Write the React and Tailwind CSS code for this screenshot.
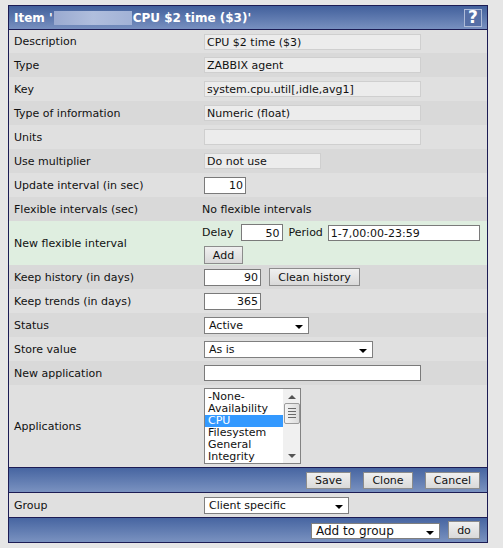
import React from "react";

const Arrow = () => (
  <span className="mt-[4px] h-0 w-0 border-l-[4px] border-r-[4px] border-t-[4px] border-l-transparent border-r-transparent border-t-black" />
);

const Select = ({ w, text }) => (
  <div className={`ml-[2px] flex h-[17px] items-center justify-between border border-[#7f7f7f] bg-white pl-[4px] pr-[5px] ${w}`}>
    <span className="pt-[1px] leading-none">{text}</span>
    <Arrow />
  </div>
);

const RO = ({ w, text }) => (
  <div className={`ml-[2px] flex h-[16px] items-center border border-[#cfcfcf] bg-[#ececec] pl-[2px] pt-[1px] leading-none ${w}`}>{text}</div>
);

const Num = ({ w, text }) => (
  <div className={`ml-[2px] flex h-[17px] items-center justify-end border border-[#7a7a7a] bg-white pr-[2px] pt-[1px] leading-none ${w}`}>{text}</div>
);

const Btn = ({ w, text, h = "h-[17px]" }) => (
  <div className={`flex ${h} items-center justify-center border border-[#8c8c8c] bg-gradient-to-b from-[#f0f0f0] to-[#d9d9d9] pt-[1px] leading-none ${w}`}>{text}</div>
);

const Row = ({ label, bg, h = "h-[24px]", children }) => (
  <div className={`flex items-center ${h} ${bg}`}>
    <div className="w-[193px] shrink-0 pl-[5px] pt-[2px]">{label}</div>
    <div className="flex flex-1 items-center">{children}</div>
  </div>
);

const L = "bg-[#e0e0e0]";
const D = "bg-[#d9d9d9]";

export default function App() {
  return (
    <div className="h-[548px] w-[503px] bg-[#e6e6e6] pl-[8px] pt-[5px] font-['DejaVu_Sans',Verdana,sans-serif] text-[11px] text-[#111]">
      <div className="w-[480px] border border-[#1c1c54]">
        {/* header */}
        <div className="flex h-[24px] items-center justify-between border-b border-[#1c1c54] bg-gradient-to-b from-[#42609c] to-[#7890bf] pl-[5px] pr-[5px]">
          <div className="flex items-center pt-[1px] text-[12px] font-bold leading-none text-white">
            <span>Item '</span>
            <span className="mx-[1px] inline-block h-[14px] w-[78px] bg-gradient-to-r from-[#9aaad0] via-[#b0bedd] to-[#a2b2d6] blur-[0.5px]" />
            <span>CPU $2 time ($3)'</span>
          </div>
          <div className="flex h-[18px] w-[18px] items-center justify-center border border-[#aebbd8] bg-[#566fa6] text-[17px] font-bold leading-none text-white">?</div>
        </div>

        <Row label="Description" bg={L} h="h-[23px]"><RO w="w-[217px]" text="CPU $2 time ($3)" /></Row>
        <Row label="Type" bg={D}><RO w="w-[217px]" text="ZABBIX agent" /></Row>
        <Row label="Key" bg={L}><RO w="w-[217px]" text="system.cpu.util[,idle,avg1]" /></Row>
        <Row label="Type of information" bg={D}><RO w="w-[217px]" text="Numeric (float)" /></Row>
        <Row label="Units" bg={L}><RO w="w-[217px]" text="" /></Row>
        <Row label="Use multiplier" bg={D}><RO w="w-[117px]" text="Do not use" /></Row>
        <Row label="Update interval (in sec)" bg={L}><Num w="w-[42px]" text="10" /></Row>
        <Row label="Flexible intervals (sec)" bg={D}><span className="pt-[2px]">No flexible intervals</span></Row>
        <div className="flex h-[44px] items-center bg-[#dfeee0]">
          <div className="w-[193px] shrink-0 pl-[5px] pt-[2px]">New flexible interval</div>
          <div className="flex flex-col gap-[5px] pt-[2px]">
            <div className="flex items-center">
              <span className="mr-[5px] pt-[1px]">Delay</span>
              <Num w="w-[42px]" text="50" />
              <span className="ml-[6px] mr-[5px] pt-[1px]">Period</span>
              <div className="flex h-[16px] w-[152px] items-center border border-[#7a7a7a] bg-white pl-[2px] pt-[1px] leading-none">1-7,00:00-23:59</div>
            </div>
            <div className="ml-[2px]"><Btn w="w-[39px]" h="h-[18px]" text="Add" /></div>
          </div>
        </div>
        <Row label="Keep history (in days)" bg={D}>
          <Num w="w-[57px]" text="90" />
          <div className="ml-[8px]"><Btn w="w-[91px]" h="h-[18px]" text="Clean history" /></div>
        </Row>
        <Row label="Keep trends (in days)" bg={L}><Num w="w-[57px]" text="365" /></Row>
        <Row label="Status" bg={D}><Select w="w-[105px]" text="Active" /></Row>
        <Row label="Store value" bg={L}><Select w="w-[169px]" text="As is" /></Row>
        <Row label="New application" bg={D}>
          <div className="ml-[2px] h-[16px] w-[217px] border border-[#7a7a7a] bg-white" />
        </Row>
        <Row label="Applications" bg={L} h="h-[82px]">
          <div className="ml-[2px] mt-[-1px] flex h-[76px] w-[97px] overflow-hidden border border-[#828282] bg-white">
            <div className="flex flex-1 flex-col pt-[2px] leading-[12px]">
              <div className="pl-[3px]">-None-</div>
              <div className="pl-[3px]">Availability</div>
              <div className="bg-[#3399ff] pl-[3px] text-white">CPU</div>
              <div className="pl-[3px]">Filesystem</div>
              <div className="pl-[3px]">General</div>
              <div className="pl-[3px]">Integrity</div>
            </div>
            <div className="flex w-[17px] flex-col items-center bg-[#f0f0f0]">
              <div className="flex h-[14px] items-center justify-center">
                <span className="mt-[3px] h-0 w-0 border-b-[4px] border-l-[4px] border-r-[4px] border-b-[#555] border-l-transparent border-r-transparent" />
              </div>
              <div className="flex h-[21px] w-[16px] flex-col items-center justify-center gap-[2px] rounded-[2px] border border-[#9b9b9b] bg-gradient-to-r from-[#f4f4f4] to-[#dcdcdc]">
                <span className="h-[1px] w-[8px] bg-[#6a6a6a]" />
                <span className="h-[1px] w-[8px] bg-[#6a6a6a]" />
                <span className="h-[1px] w-[8px] bg-[#6a6a6a]" />
                <span className="h-[1px] w-[8px] bg-[#6a6a6a]" />
              </div>
              <div className="flex-1" />
              <div className="flex h-[12px] items-center justify-center">
                <span className="mb-[2px] h-0 w-0 border-l-[4px] border-r-[4px] border-t-[4px] border-l-transparent border-r-transparent border-t-[#555]" />
              </div>
            </div>
          </div>
        </Row>

        {/* footer 1 */}
        <div className="flex h-[26px] items-center justify-end gap-[12px] border-y border-[#1c1c54] bg-gradient-to-b from-[#4765a1] to-[#7a92c0] pr-[7px]">
          <Btn w="w-[45px]" text="Save" />
          <Btn w="w-[50px]" text="Clone" />
          <Btn w="w-[55px]" text="Cancel" />
        </div>
        <Row label="Group" bg={L}><Select w="w-[145px]" text="Client specific" /></Row>
        <div className="flex h-[25px] items-center justify-end border-t border-[#1c1c54] bg-gradient-to-b from-[#4765a1] to-[#7a92c0] pr-[7px]">
          <div className="mt-[1px] flex h-[16px] w-[129px] items-center justify-between border border-[#7f7f7f] bg-white pl-[4px] pr-[5px] text-[12px]">
            <span className="pt-[1px] leading-none">Add to group</span>
            <Arrow />
          </div>
          <div className="ml-[8px]"><Btn w="w-[32px]" h="h-[18px]" text="do" /></div>
        </div>
      </div>
    </div>
  );
}
